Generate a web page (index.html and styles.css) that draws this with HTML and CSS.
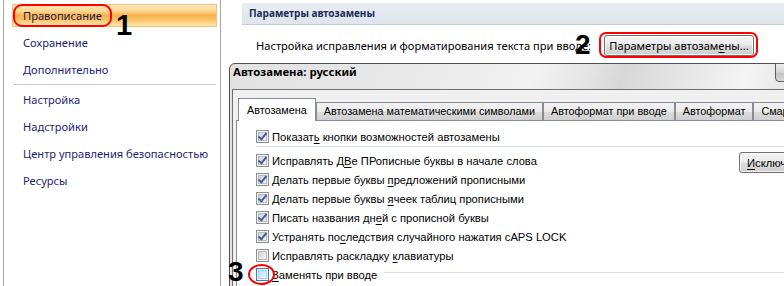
FILE: index.html
```html
<!DOCTYPE html>
<html lang="ru">
<head>
<meta charset="utf-8">
<title>Параметры Word</title>
<link rel="stylesheet" href="styles.css">
</head>
<body>
<div class="app">
  <aside class="sidebar">
    <div class="nav-item active">Правописание</div>
    <div class="nav-item">Сохранение</div>
    <div class="nav-item">Дополнительно</div>
    <div class="nav-sep"></div>
    <div class="nav-item">Настройка</div>
    <div class="nav-item">Надстройки</div>
    <div class="nav-item">Центр управления безопасностью</div>
    <div class="nav-item">Ресурсы</div>
  </aside>
  <main class="main">
    <div class="section-head">Параметры автозамены</div>
    <div class="section-row">
      <span class="section-text">Настройка исправления и форматирования текста при вводе:</span>
      <button class="btn btn-autocorrect">Параметры автозам<u>е</u>ны...</button>
    </div>
  </main>
</div>

<div class="dialog">
  <div class="dialog-title">Автозамена: русский</div>
  <div class="dialog-close"></div>
  <div class="dialog-body">
    <div class="tabs">
      <div class="tab selected">Автозамена</div>
      <div class="tab">Автозамена математическими символами</div>
      <div class="tab">Автоформат при вводе</div>
      <div class="tab">Автоформат</div>
      <div class="tab">Смарт-теги</div>
    </div>
    <div class="panel">
      <div class="opt"><span class="cb checked"></span><span>Показат<u>ь</u> кнопки возможностей автозамены</span></div>
      <div class="sep"></div>
      <div class="group">
        <div class="opts">
          <div class="opt"><span class="cb checked"></span><span>Исправлять Д<u>В</u>е ПРописные буквы в начале слова</span></div>
          <div class="opt"><span class="cb checked"></span><span>Делать первые буквы <u>п</u>редложений прописными</span></div>
          <div class="opt"><span class="cb checked"></span><span>Делать первые буквы <u>я</u>чеек таблиц прописными</span></div>
          <div class="opt"><span class="cb checked"></span><span>Писать названия дн<u>е</u>й с прописной буквы</span></div>
          <div class="opt"><span class="cb checked"></span><span>Устранять по<u>с</u>ледствия случайного нажатия cAPS LOCK</span></div>
          <div class="opt"><span class="cb"></span><span>Исправлять раскладку <u>к</u>лавиатуры</span></div>
        </div>
        <button class="btn btn-except"><u>И</u>сключения...</button>
      </div>
      <div class="opt opt-group"><span class="cb hover"></span><span><u>З</u>аменять при вводе</span></div>
    </div>
  </div>
</div>

<div class="ring ring-1"></div>
<div class="ring ring-2"></div>
<div class="ring ring-3"></div>
<div class="num num-1">1</div>
<div class="num num-2">2</div>
<div class="num num-3">3</div>
</body>
</html>
```
FILE: styles.css
```css
html, body {
  margin: 0;
  padding: 0;
}
body {
  width: 784px;
  height: 286px;
  overflow: hidden;
  position: relative;
  background: #ffffff;
  font: 11.1px "Noto Sans", sans-serif;
  color: #000;
}
u { text-decoration: underline; text-underline-offset: 2px; }

.app {
  display: grid;
  grid-template-columns: 221px 1fr;
  height: 286px;
}

/* sidebar */
.sidebar {
  margin-left: 3px;
  border-left: 1px solid #a3a3a3;
  border-right: 1px solid #a3a3a3;
  padding: 4px 3px 0 8px;
  display: flex;
  flex-direction: column;
  gap: 4px;
}
.nav-item {
  box-sizing: border-box;
  height: 23px;
  line-height: 21px;
  padding-left: 10px;
  border: 1px solid transparent;
  color: #1b1f74;
  white-space: nowrap;
}
.nav-item.active {
  color: #1a1a4a;
  border-color: #efc27c;
  background: linear-gradient(#fde8bb 0%, #fcd690 30%, #f9b048 50%, #fbc469 70%, #fde6b0 100%);
}
.nav-sep {
  height: 1px;
  background: #c9c9c9;
  margin: -1px 1px -1px 2px;
}

/* main */
.main {
  display: flex;
  flex-direction: column;
  min-width: 0;
}
.section-head {
  margin: 3px 0 0 21px;
  height: 21px;
  line-height: 21px;
  padding-left: 7px;
  border-bottom: 1px solid #c3cbd3;
  background: linear-gradient(#e8edf2, #dee5ec);
  font-weight: bold;
  font-size: 10px;
  color: #1c2b5a;
}
.section-row {
  display: flex;
  align-items: center;
  justify-content: space-between;
  height: 24px;
  margin-top: 8px;
  padding: 0 30px 0 35px;
  white-space: nowrap;
}
.btn {
  font: inherit;
  color: #000;
  height: 21px;
  padding: 0;
  white-space: nowrap;
  border: 1px solid #707070;
  border-radius: 3px;
  background: linear-gradient(#f3f3f3 0%, #ebebeb 48%, #dddddd 52%, #cfcfcf 100%);
  box-shadow: inset 0 0 0 1px rgba(255,255,255,.7);
}
.btn-autocorrect { width: 150px; }

/* dialog window */
.dialog {
  position: absolute;
  left: 229px;
  top: 63px;
  width: 600px;
  height: 240px;
  box-sizing: border-box;
  border: 1px solid #4f4f4f;
  border-radius: 6px 6px 0 0;
  padding-left: 2px;
  background: linear-gradient(110deg, #e1e1e1 0%, #eaeaea 30%, #f2f2f2 45%, #e6e6e6 52%, #d7d7d7 58%, #e4e4e4 66%, #f4f4f4 76%, #dedede 86%, #e6e6e6 100%);
  font: 11.2px "Liberation Sans", sans-serif;
}
.dialog-title {
  height: 25px;
  line-height: 24px;
  padding-left: 1px;
  font: bold 11.4px "Noto Sans", sans-serif;
}
.dialog-close {
  position: absolute;
  left: 545px;
  top: -1px;
  width: 44px;
  height: 17px;
  border: 1px solid #5f5f5f;
  border-radius: 0 0 4px 4px;
  background: linear-gradient(#eeeeee, #d2d2d2 50%, #c2c2c2 51%, #d6d6d6);
}
.dialog-body {
  border-top: 1px solid #707070;
  border-left: 1px solid #707070;
  background: #f0f0f0;
  padding: 0 0 0 3px;
  height: 200px;
}
.tabs {
  display: flex;
  align-items: flex-end;
  padding: 8px 0 0 2px;
  position: relative;
  z-index: 1;
  font-size: 10.8px;
}
.tab {
  box-sizing: border-box;
  height: 18px;
  line-height: 16px;
  padding: 0 7px;
  border: 1px solid #898c95;
  border-bottom: none;
  background: linear-gradient(#f2f2f2 0%, #ebebeb 50%, #dddddd 51%, #cfcfcf 100%);
  white-space: nowrap;
}
.tab.selected {
  height: 23px;
  line-height: 22px;
  padding: 0 8px;
  margin-bottom: -1px;
  background: #ffffff;
}
.panel {
  background: #ffffff;
  border: 1px solid #898c95;
  padding: 6px 0 0 19px;
  height: 170px;
}
.opt {
  display: flex;
  align-items: center;
  gap: 3px;
  height: 19px;
  white-space: nowrap;
}
.sep {
  border-top: 1px solid #d5dfe5;
  margin-bottom: 4px;
}
.group {
  display: grid;
  grid-template-columns: 483px auto;
  align-items: start;
}
.btn-except {
  margin-top: 1px;
  width: 90px;
  text-align: left;
  padding-left: 7px;
}
.opt-group::after {
  content: "";
  flex: 1;
  align-self: flex-start;
  margin: 7px 0 0 4px;
  border-top: 1px solid #d5dfe5;
}

/* checkboxes */
.cb {
  position: relative;
  flex: none;
  width: 13px;
  height: 13px;
  box-sizing: border-box;
  border: 1px solid #8e8f8f;
  background: #f4f4f4;
}
.cb::before {
  content: "";
  position: absolute;
  inset: 1px;
  background: linear-gradient(135deg, #cbcfd5 0%, #e3e5e8 50%, #f6f6f6 100%);
  border: 1px solid #b9bcc1;
  box-sizing: border-box;
}
.cb.checked::after {
  content: "";
  position: absolute;
  left: 3px;
  top: 0px;
  width: 3px;
  height: 7px;
  border-right: 2px solid #4a5d9c;
  border-bottom: 2px solid #4a5d9c;
  transform: rotate(40deg);
}
.cb.hover {
  border-color: #3c7fb1;
}
.cb.hover::before {
  border-color: #a6d2f3;
  background: linear-gradient(135deg, #b8ddf8 0%, #d5ebfb 50%, #ecf7fe 100%);
}

/* annotations */
.ring {
  position: absolute;
  box-sizing: border-box;
  border: 2px solid #ff0000;
}
.ring-1 { left: 13px; top: 4px; width: 99px; height: 23px; border-radius: 9px; }
.ring-2 { left: 599px; top: 32px; width: 159px; height: 26px; border-radius: 7px; }
.ring-3 { left: 248px; top: 264px; width: 27px; height: 21px; border-radius: 50%; }
.num {
  position: absolute;
  font: bold 29px/1 "Liberation Sans", sans-serif;
  color: #000;
}
.num-1 { left: 116px; top: 11px; }
.num-2 { left: 575px; top: 31px; font-size: 28px; }
.num-3 { left: 228px; top: 258px; font-size: 28px; }
```
